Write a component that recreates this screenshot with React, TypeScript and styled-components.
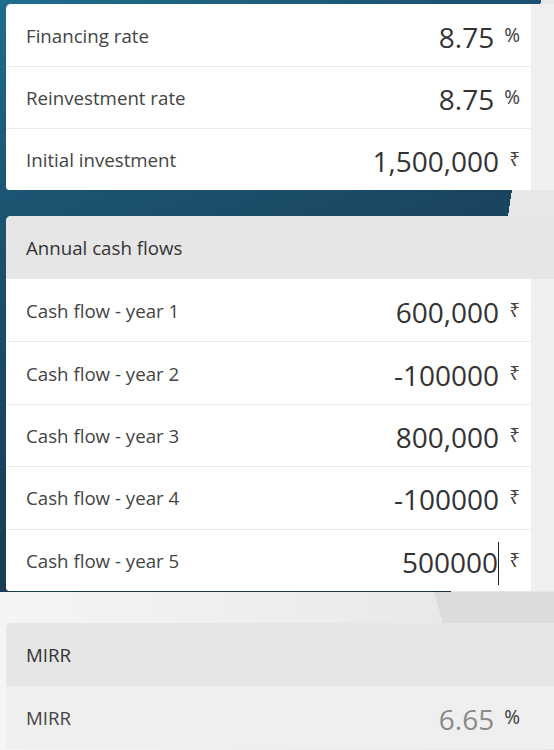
import styled, { createGlobalStyle } from "styled-components";

const GlobalStyle = createGlobalStyle`
  html, body {
    margin: 0;
    padding: 0;
    background: #e8e8e8;
  }
  body {
    font-family: "Open Sans", "Noto Sans", "DejaVu Sans", sans-serif;
  }
`;

const Page = styled.div`
  width: 100%;
  min-height: 750px;
  display: flex;
  flex-direction: column;
`;

// dark backdrop behind the input cards, cut on a slant at the right
const Hero = styled.section`
  display: flex;
  flex-direction: column;
  gap: 26px;
  padding: 4px 0 1px 6px;
  background:
    linear-gradient(98.7deg, transparent 534.8px, #e7e7e7 534.8px),
    linear-gradient(
      155deg,
      #1f6e8c 0%,
      #1c5674 22%,
      #1a4560 50%,
      #183b4f 75%,
      #163544 100%
    );
`;

const Lower = styled.section`
  flex: 1;
  padding: 31px 0 0 6px;
  background:
    linear-gradient(73.8deg, transparent 425.3px, #dcdcdc 425.3px) top / 100% 31px no-repeat,
    linear-gradient(to right, #f5f5f5, #e6e6e6);
`;

const Card = styled.div`
  display: flex;
  flex-direction: column;
  background: #efefef;
  padding-right: 23px;
  border-radius: 5px 0 0 4px;
  overflow: hidden;
`;

const Header = styled.div`
  height: 63px;
  margin-right: -23px;
  padding-left: 20px;
  display: flex;
  align-items: center;
  background: #e6e6e6;
  color: #333;
  font-size: 18.7px;
`;

const Row = styled.div<{ $muted?: boolean; $h?: number }>`
  box-sizing: border-box;
  height: ${(p) => p.$h ?? 62}px;
  display: flex;
  align-items: center;
  padding: 0 11px 0 20px;
  background: ${(p) => (p.$muted ? "#efefef" : "#ffffff")};
  margin-right: ${(p) => (p.$muted ? "-23px" : "0")};
  padding-right: ${(p) => (p.$muted ? "34px" : "11px")};
  & + & {
    border-top: 1px solid #ebebeb;
  }
`;

const Label = styled.span`
  flex: 1;
  font-size: 18.7px;
  color: #444;
`;

const Value = styled.span<{ $muted?: boolean; $caret?: boolean }>`
  display: inline-flex;
  align-items: center;
  margin-right: 10px;
  margin-top: 3px;
  font-size: 28px;
  color: ${(p) => (p.$muted ? "#8a8a8a" : "#333")};
  &::after {
    content: "";
    display: ${(p) => (p.$caret ? "block" : "none")};
    width: 1px;
    height: 43px;
    margin-top: 4px;
    background: #222;
  }
`;

const Unit = styled.span`
  font-family: "Noto Sans", "DejaVu Sans", sans-serif;
  font-size: 19px;
  line-height: 1;
  color: #444;
`;

interface Field {
  label: string;
  value: string;
  unit: string;
  caret?: boolean;
}

const inputs: Field[] = [
  { label: "Financing rate", value: "8.75", unit: "%" },
  { label: "Reinvestment rate", value: "8.75", unit: "%" },
  { label: "Initial investment", value: "1,500,000", unit: "₹" },
];

const flows: Field[] = [
  { label: "Cash flow - year 1", value: "600,000", unit: "₹" },
  { label: "Cash flow - year 2", value: "-100000", unit: "₹" },
  { label: "Cash flow - year 3", value: "800,000", unit: "₹" },
  { label: "Cash flow - year 4", value: "-100000", unit: "₹" },
  { label: "Cash flow - year 5", value: "500000", unit: "₹", caret: true },
];

function App() {
  return (
    <Page>
      <GlobalStyle />
      <Hero>
        <Card>
          {inputs.map((f) => (
            <Row key={f.label}>
              <Label>{f.label}</Label>
              <Value>{f.value}</Value>
              <Unit>{f.unit}</Unit>
            </Row>
          ))}
        </Card>
        <Card>
          <Header>Annual cash flows</Header>
          {flows.map((f) => (
            <Row key={f.label} $h={62.4}>
              <Label>{f.label}</Label>
              <Value $caret={f.caret}>{f.value}</Value>
              <Unit>{f.unit}</Unit>
            </Row>
          ))}
        </Card>
      </Hero>
      <Lower>
        <Card>
          <Header>MIRR</Header>
          <Row $muted $h={63}>
            <Label>MIRR</Label>
            <Value $muted>6.65</Value>
            <Unit>%</Unit>
          </Row>
        </Card>
      </Lower>
    </Page>
  );
}

export default App;
